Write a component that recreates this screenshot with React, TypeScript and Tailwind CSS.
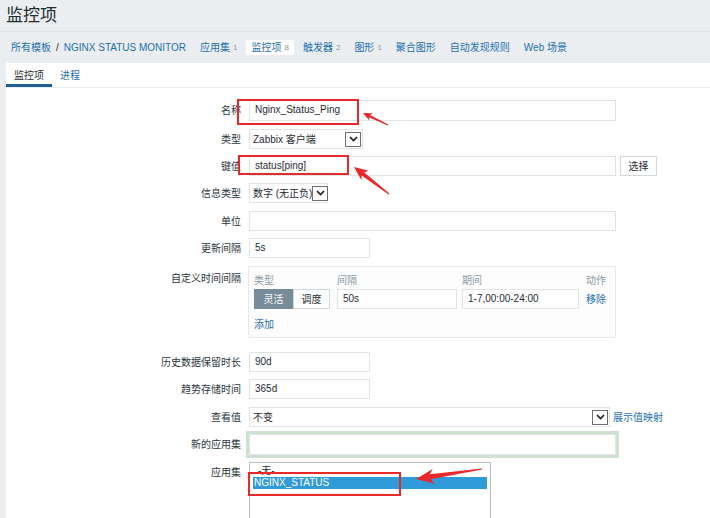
import React from 'react';

// shared field look
const inputBase = 'h-[20px] border border-[#dfe4e7] bg-white px-[5px] leading-[18px] text-[#1f2c33] whitespace-nowrap overflow-hidden';

function DropBox() {
  return (
    <div className="w-[16px] h-[15px] border border-[#6f6f6f] bg-white flex items-center justify-center shrink-0">
      <svg width="9" height="6" viewBox="0 0 9 6">
        <path d="M1 1l3.5 3.5L8 1" stroke="#1a1a1a" strokeWidth="1.6" fill="none" />
      </svg>
    </div>
  );
}

function Select({ value, width }: { value: string; width: string }) {
  return (
    <div className={`h-[20px] border border-[#dfe4e7] bg-white flex items-center justify-between pl-[3px] pr-[1px] ${width}`}>
      <span className="text-[#1f2c33] whitespace-nowrap">{value}</span>
      <DropBox />
    </div>
  );
}

function Row({ label, height, children }: { label: string; height: string; children: React.ReactNode }) {
  return (
    <div className={`flex items-start ${height}`}>
      <div className="w-[235px] h-[20px] leading-[21px] text-right text-[#2a363d] shrink-0">{label}</div>
      <div className="ml-[8px] flex items-center">{children}</div>
    </div>
  );
}

function NavItem({ text, count, active }: { text: string; count?: string; active?: boolean }) {
  return (
    <div className={`flex items-center h-[15px] px-[5px] ${active ? 'bg-white' : ''}`}>
      <span className="text-[#1f6fb0]">{text}</span>
      {count && <span className="ml-[3px] text-[8px] text-[#8a9ba4]">{count}</span>}
    </div>
  );
}

function arrowPoints(tx: number, ty: number, ex: number, ey: number, L: number, W: number, w: number) {
  const dx = ex - tx;
  const dy = ey - ty;
  const len = Math.hypot(dx, dy);
  const ux = dx / len;
  const uy = dy / len;
  const nx = -uy;
  const ny = ux;
  const bx = tx + ux * L;
  const by = ty + uy * L;
  const cx = tx + ux * L * 0.8;
  const cy = ty + uy * L * 0.8;
  const pts = [
    [tx, ty],
    [bx + (nx * W) / 2, by + (ny * W) / 2],
    [cx + (nx * w) / 2, cy + (ny * w) / 2],
    [ex + nx * 0.6, ey + ny * 0.6],
    [ex - nx * 0.6, ey - ny * 0.6],
    [cx - (nx * w) / 2, cy - (ny * w) / 2],
    [bx - (nx * W) / 2, by - (ny * W) / 2],
  ];
  return pts.map((p) => p.join(',')).join(' ');
}

export default function App() {
  return (
    <div className="relative w-[710px] h-[518px] overflow-hidden bg-[#ebeef0] text-[10px] font-['Liberation_Sans','Noto_Sans_CJK_SC',sans-serif]">
      {/* page title */}
      <div className="h-[32px] border-b border-[#dde2e5] pl-[6px] flex items-center">
        <h1 className="text-[17px] text-[#1f2c33] font-normal leading-none">监控项</h1>
      </div>

      {/* breadcrumbs + sub nav */}
      <div className="h-[31px] flex items-center pl-[11px]">
        <span className="text-[#1f6fb0]">所有模板</span>
        <span className="mx-[5px] text-[#1f2c33]">/</span>
        <span className="text-[#1f6fb0]">NGINX STATUS MONITOR</span>
        <div className="flex items-center ml-[9px] gap-[4px]">
          <NavItem text="应用集" count="1" />
          <NavItem text="监控项" count="8" active />
          <NavItem text="触发器" count="2" />
          <NavItem text="图形" count="1" />
          <NavItem text="聚合图形" />
          <NavItem text="自动发现规则" />
          <NavItem text="Web 场景" />
        </div>
      </div>

      {/* white panel */}
      <div className="ml-[6px] bg-white h-[455px]">
        <div className="h-[25px] flex items-stretch border-b border-[#ebeef0]">
          <div className="w-[46px] flex items-center justify-center border-b-[3px] border-[#1f5f94] text-[#1f2c33] pt-[3px]">
            监控项
          </div>
          <div className="px-[8px] flex items-center text-[#1f6fb0]">进程</div>
        </div>

        <div className="pt-[12px]">
          <Row label="名称" height="h-[29px]">
            <div className={`${inputBase} h-[21px] w-[367px] border-[#5796c4] bg-[#f6fafd]`}>Nginx_Status_Ping</div>
          </Row>
          <Row label="类型" height="h-[27px]">
            <Select value="Zabbix 客户端" width="w-[114px]" />
          </Row>
          <Row label="键值" height="h-[27px]">
            <div className={`${inputBase} w-[367px]`}>status[ping]</div>
            <div className="ml-[4px] h-[20px] w-[37px] border border-[#cfd8dc] bg-white flex items-center justify-center text-[#1f2c33]">
              选择
            </div>
          </Row>
          <Row label="信息类型" height="h-[28px]">
            <Select value="数字 (无正负)" width="w-[79px]" />
          </Row>
          <Row label="单位" height="h-[27px]">
            <div className={`${inputBase} w-[367px]`}></div>
          </Row>
          <Row label="更新间隔" height="h-[28px]">
            <div className={`${inputBase} w-[121px]`}>5s</div>
          </Row>
          <div className="flex items-start h-[86px]">
            <div className="w-[235px] pt-[6px] leading-[14px] text-right text-[#2a363d] shrink-0">自定义时间间隔</div>
            <div className="ml-[7px] w-[368px] h-[72px] border border-[#e6e9eb] bg-[#fdfdfd] pl-[5px] pt-[6px]">
              <div className="flex h-[16px] text-[#8a9ba4]">
                <div className="w-[83px]">类型</div>
                <div className="w-[125px]">间隔</div>
                <div className="w-[124px]">期间</div>
                <div>动作</div>
              </div>
              <div className="flex items-center h-[20px]">
                <div className="w-[83px] flex">
                  <div className="h-[20px] w-[39px] bg-[#768d99] text-white flex items-center justify-center">灵活</div>
                  <div className="h-[20px] w-[37px] border border-[#cfd8dc] bg-white text-[#1f2c33] flex items-center justify-center">调度</div>
                </div>
                <div className="w-[125px]">
                  <div className={`${inputBase} w-[120px]`}>50s</div>
                </div>
                <div className="w-[124px]">
                  <div className={`${inputBase} w-[117px]`}>1-7,00:00-24:00</div>
                </div>
                <div className="text-[#1f6fb0]">移除</div>
              </div>
              <div className="mt-[9px] text-[#1f6fb0] leading-[14px]">添加</div>
            </div>
          </div>
          <Row label="历史数据保留时长" height="h-[27px]">
            <div className={`${inputBase} w-[121px]`}>90d</div>
          </Row>
          <Row label="趋势存储时间" height="h-[28px]">
            <div className={`${inputBase} w-[121px]`}>365d</div>
          </Row>
          <Row label="查看值" height="h-[27px]">
            <Select value="不变" width="w-[361px]" />
            <span className="ml-[3px] text-[#1f6fb0]">展示值映射</span>
          </Row>
          <Row label="新的应用集" height="h-[28px]">
            <div className={`${inputBase} w-[367px] h-[21px] ring-[3px] ring-[#cfe1cf]`}></div>
          </Row>
          <Row label="应用集" height="h-[60px]">
            <div className="w-[242px] h-[60px] border border-[#b9bfc3] bg-white pt-[2px] px-[3px]">
              <div className="h-[12px] leading-[12px] pl-[5px] text-[#1f2c33]">-无-</div>
              <div className="h-[12px] leading-[12px] pl-[1px] bg-[#2f9bd8] text-white">NGINX_STATUS</div>
            </div>
          </Row>
        </div>
      </div>

      {/* annotation boxes */}
      <div className="absolute left-[237px] top-[99px] w-[122px] h-[26px] border-2 border-[#e8282b]" />
      <div className="absolute left-[238px] top-[155px] w-[111px] h-[20px] border-2 border-[#e8282b]" />
      <div className="absolute left-[248px] top-[472px] w-[153px] h-[24px] border-2 border-[#e8282b]" />

      {/* annotation arrows */}
      <svg className="absolute left-0 top-0 pointer-events-none" width="710" height="518">
        <polygon points={arrowPoints(363, 113, 388, 125, 9, 8, 2.5)} fill="#e8282b" />
        <polygon points={arrowPoints(354, 167, 389, 194, 14, 12, 4)} fill="#e8282b" />
        <polygon points={arrowPoints(416, 479, 482, 469, 18, 15, 5)} fill="#e8282b" />
      </svg>
    </div>
  );
}
